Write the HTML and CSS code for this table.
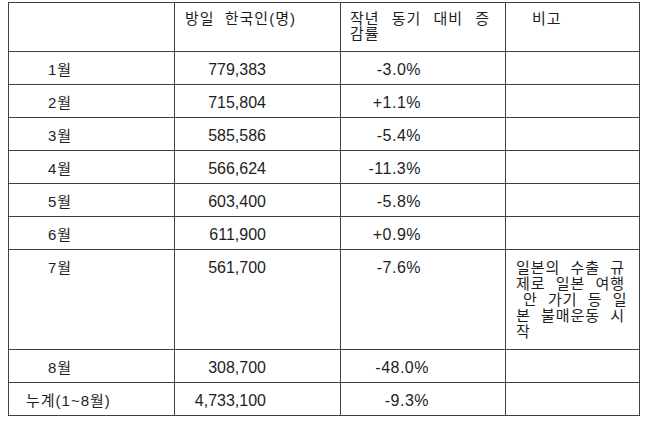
FILE: index.html
```html
<!DOCTYPE html>
<html lang="ko">
<head>
<meta charset="utf-8">
<title>방일 한국인</title>
<link rel="stylesheet" href="styles.css">
</head>
<body>
<div class="page">
<table class="stats">
  <colgroup>
    <col class="c1"><col class="c2"><col class="c3"><col class="c4">
  </colgroup>
  <thead>
    <tr class="head">
      <th></th>
      <th class="h2">방일 한국인(명)</th>
      <th class="h3">작년 동기 대비 증<br>감률</th>
      <th class="h4">비고</th>
    </tr>
  </thead>
  <tbody>
    <tr class="row"><td class="mon">1월</td><td class="num">779,383</td><td class="pct">-3.0%</td><td></td></tr>
    <tr class="row"><td class="mon">2월</td><td class="num">715,804</td><td class="pct">+1.1%</td><td></td></tr>
    <tr class="row"><td class="mon">3월</td><td class="num">585,586</td><td class="pct">-5.4%</td><td></td></tr>
    <tr class="row"><td class="mon">4월</td><td class="num">566,624</td><td class="pct">-11.3%</td><td></td></tr>
    <tr class="row"><td class="mon">5월</td><td class="num">603,400</td><td class="pct">-5.8%</td><td></td></tr>
    <tr class="row"><td class="mon">6월</td><td class="num">611,900</td><td class="pct">+0.9%</td><td></td></tr>
    <tr class="row tall"><td class="mon">7월</td><td class="num">561,700</td><td class="pct">-7.6%</td><td class="note"><span class="ln">일본의 수출 규</span><span class="ln">제로 일본 여행</span><span class="ln ln-indent">안 가기 등 일</span><span class="ln">본 불매운동 시</span><span class="ln">작</span></td></tr>
    <tr class="row"><td class="mon">8월</td><td class="num">308,700</td><td class="pct pct-wide">-48.0%</td><td></td></tr>
    <tr class="row"><td class="total">누계(1~8월)</td><td class="num">4,733,100</td><td class="pct pct-wide">-9.3%</td><td></td></tr>
  </tbody>
</table>
</div>
</body>
</html>
```

FILE: styles.css
```css
html, body {
  margin: 0;
  padding: 0;
  background: #ffffff;
}

.page {
  padding: 2px 0 0 8px;
}

.stats {
  border-collapse: collapse;
  table-layout: fixed;
  width: 631px;
  font-family: "Liberation Sans", "Noto Sans CJK KR", sans-serif;
  font-size: 15px;
  color: #1e1e1e;
  letter-spacing: 1px;
  word-spacing: 5px;
}

.c1 { width: 166px; }
.c2 { width: 166px; }
.c3 { width: 165px; }
.c4 { width: 134px; }

.stats th,
.stats td {
  border: 1px solid #404040;
  vertical-align: top;
  padding: 0;
  font-weight: normal;
  text-align: left;
  line-height: 16px;
}

.stats .head {
  height: 49px;
}

.stats .head th {
  padding-top: 8px;
}

.stats .h2 { padding-left: 10px; }

.stats .h3 {
  padding-left: 9px;
  line-height: 15px;
  word-spacing: 7px;
}

.stats .h4 { padding-left: 26px; }

.stats .row {
  height: 33px;
}

.stats .row td {
  padding-top: 10px;
}

.stats .row.tall {
  height: 100px;
}

.stats .mon { padding-left: 39px; }

.stats .total { padding-left: 17px; }

.stats .num {
  text-align: right;
  padding-right: 74px;
  font-size: 16px;
  letter-spacing: 0;
}

.stats .pct {
  text-align: right;
  padding-right: 84px;
  font-size: 16px;
  letter-spacing: 0.5px;
}

.stats .pct-wide {
  padding-right: 76px;
}

.stats .note {
  padding-left: 10px;
}

.ln {
  display: block;
  white-space: pre;
}

.ln-indent {
  padding-left: 7px;
}
```
